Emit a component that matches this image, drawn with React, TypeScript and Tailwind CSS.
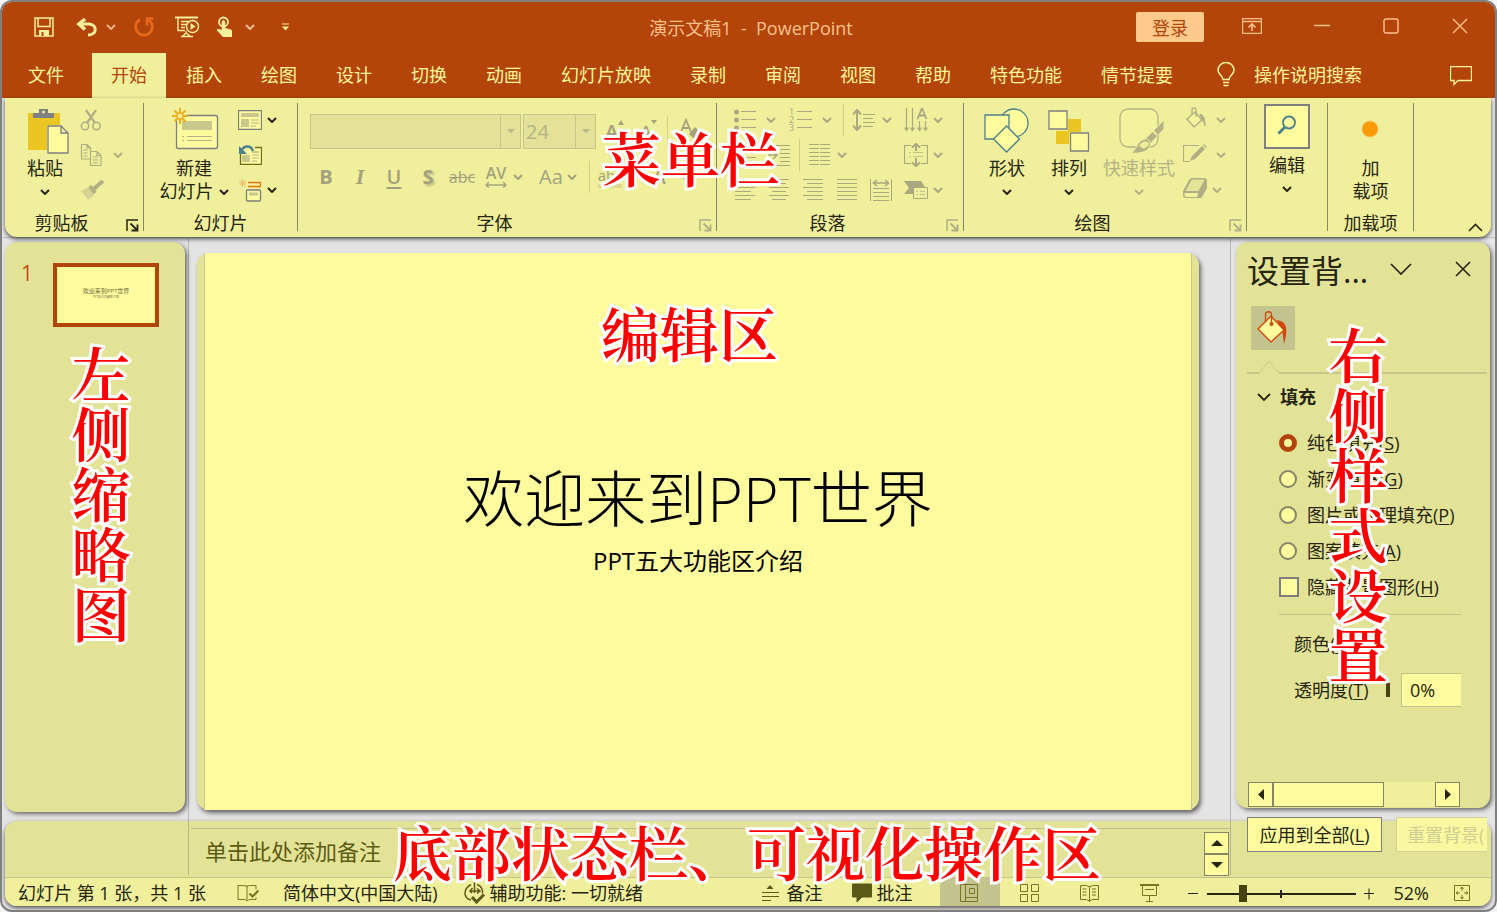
import { useState, type ReactNode } from "react";
import clsx from "clsx";

const TABS = ["文件", "开始", "插入", "绘图", "设计", "切换", "动画", "幻灯片放映", "录制", "审阅", "视图", "帮助", "特色功能", "情节提要"];

const FILLS = [
  { value: "solid", label: "纯色填充", hotkey: "S" },
  { value: "gradient", label: "渐变填充", hotkey: "G" },
  { value: "picture", label: "图片或纹理填充", hotkey: "P" },
  { value: "pattern", label: "图案填充", hotkey: "A" },
];

type IconProps = { w: number; h: number; children: ReactNode; className?: string };

function Icon({ w, h, children, className }: IconProps) {
  return (
    <svg width={w} height={h} viewBox={`0 0 ${w} ${h}`} fill="none" stroke="currentColor" className={clsx("shrink-0", className)} aria-hidden="true">
      {children}
    </svg>
  );
}

function Chevron({ className }: { className?: string }) {
  return (
    <Icon w={10} h={6} className={className}>
      <path d="M1 1l4 4 4-4" strokeWidth="2" />
    </Icon>
  );
}

function Callout({ text, className, vertical }: { text: string; className: string; vertical?: boolean }) {
  return (
    <div
      className={clsx(
        "absolute z-20 text-[59px] leading-[60px] font-semibold text-[#ff0000] pointer-events-none [-webkit-text-stroke:6px_white] [paint-order:stroke_fill] font-['Noto_Serif_CJK_SC','Noto_Sans_CJK_SC',serif]",
        vertical ? "w-[60px] break-all text-center" : "whitespace-nowrap",
        className
      )}
    >
      {text}
    </div>
  );
}

function Group({ label, launcher, className, children }: { label?: string; launcher?: "on" | "off"; className: string; children: ReactNode }) {
  return (
    <>
      <section className={clsx("flex shrink-0 flex-col", className)}>
        <div className="flex h-[105px]">{children}</div>
        <div className={clsx("flex h-[30px] items-center", launcher && "pr-1")}>
          <span className={clsx("flex-1 pt-px text-center", launcher && "mr-2")}>{label}</span>
          {launcher && (
            <button aria-label={`${label}设置`} className={clsx("pt-[6px]", launcher === "on" ? "text-[#26250f]" : "text-[#b0af84]")}>
              <Icon w={13} h={13}>
                <path d="M1 12V1h11" strokeWidth="1.5" />
                <path d="M4.500 4.500l6 6M11.500 5.500v6h-6" strokeWidth="1.800" />
              </Icon>
            </button>
          )}
        </div>
      </section>
      <div className="mt-px mb-[6px] w-px shrink-0 bg-[#86866c]" />
    </>
  );
}

function BigButton({ icon, lines, className, disabled }: { icon: ReactNode; lines: ReactNode[]; className?: string; disabled?: boolean }) {
  return (
    <button className={clsx("flex shrink-0 flex-col items-center leading-[23px]", disabled && "text-[#b4b385]", className)}>
      <span className="flex h-[55px] items-center pt-[3px]">{icon}</span>
      {lines.map((line, i) => (
        <span key={i} className="flex h-[23px] items-center gap-[5px] whitespace-nowrap">{line}</span>
      ))}
    </button>
  );
}

function Row({ children, className }: { children: ReactNode; className?: string }) {
  return <div className={clsx("flex h-[35px] items-center", className)}>{children}</div>;
}

// six rules of text, every second one shortened for the ragged alignments
function Lines({ long, short }: { long: [number, number]; short: [number, number] }) {
  return (
    <Icon w={20} h={22}>
      {[long, short, long, short, long, short].map(([x1, x2], i) => (
        <path key={i} d={`M${x1} ${i * 4}.5H${x2}`} />
      ))}
    </Icon>
  );
}

function TitleBar() {
  return (
    <div className="flex h-[51px] items-center pb-[2px]">
      <div className="flex flex-1 items-center pl-8 text-[#f4ef9d]">
        <button aria-label="保存">
          <Icon w={20} h={20}>
            <path d="M1 1h18v18H1z" strokeWidth="1.500" />
            <path d="M4 1v8.500h12V1" strokeWidth="1.500" />
            <path d="M5 13h10v6H5z" fill="currentColor" stroke="none" />
            <path d="M8.500 15v4" stroke="#b4450a" strokeWidth="2" />
          </Icon>
        </button>
        <button aria-label="撤消" className="ml-[22px]">
          <Icon w={22} h={20}>
            <path d="M9 2L3 7l6 5.500" strokeWidth="3.500" />
            <path d="M2.500 7H13c9 1 8 11-1 11" strokeWidth="3" />
          </Icon>
        </button>
        <button aria-label="撤消列表" className="ml-2 text-[#f5b088]"><Chevron /></button>
        <button aria-label="恢复" className="ml-[18px] text-[#e8681b]">
          <Icon w={20} h={20}>
            <path d="M6 2.500a8.300 8.300 0 1 0 8 0" strokeWidth="2.600" />
            <path d="M13 8.500V1.500h6.500" strokeWidth="2.600" />
          </Icon>
        </button>
        <button aria-label="从头开始" className="ml-[21px]">
          <Icon w={25} h={22}>
            <path d="M0 1.500h23" strokeWidth="2" />
            <path d="M3 2v12.500h7M6 5.500h8M6 8.500h5M6 11.500h4M11 15v3M6 20.500h12M8 20l3-3 4 3" strokeWidth="1.400" />
            <circle cx="17.500" cy="10.500" r="6" strokeWidth="1.500" />
            <path d="M15.500 7l5 3.500-5 3.500z" fill="currentColor" stroke="none" />
          </Icon>
        </button>
        <button aria-label="触摸/鼠标模式" className="ml-4">
          <Icon w={17} h={22}>
            <circle cx="7.500" cy="6" r="4.500" strokeWidth="1.800" />
            <path d="M5.700 6a1.800 1.800 0 0 1 3.600 0v6l5.500 1.500c1 .3 1.200 1 1.200 2V21H7L.5 14c1-1.500 2.700-1.500 5.200 0z" fill="currentColor" stroke="none" />
          </Icon>
        </button>
        <button aria-label="触摸模式列表" className="ml-3 text-[#f5c090]"><Chevron /></button>
        <button aria-label="自定义快速访问工具栏" className="ml-[26px]">
          <Icon w={9} h={8}>
            <path d="M1 1h7" />
            <path d="M1 3.500h7L4.500 7.500z" fill="currentColor" stroke="none" />
          </Icon>
        </button>
      </div>
      <h1 className="pt-[2px] whitespace-pre text-[#fbc18d]">演示文稿1  -  PowerPoint</h1>
      <div className="flex flex-1 items-center justify-end pr-[27px] text-[#fbc18d]">
        <button className="mt-px h-[30px] w-[68px] rounded-[2px] bg-[#fdca8c] pt-px text-[#b4450a]">登录</button>
        <button aria-label="功能区显示选项" className="ml-[38px] pb-[2px]">
          <Icon w={20} h={16}>
            <path d="M.5.500h19v15H.5zM1 3.500h18" strokeWidth="1.400" />
            <path d="M10 13V6.500M6.500 9.500L10 6l3.500 3.500" strokeWidth="1.600" />
          </Icon>
        </button>
        <button aria-label="最小化" className="ml-[52px] pb-[2px]">
          <Icon w={16} h={16}><path d="M0 7.500h16" strokeWidth="1.400" /></Icon>
        </button>
        <button aria-label="最大化" className="ml-[53px] pb-[2px]">
          <Icon w={16} h={16}><rect x="1" y="1" width="14" height="14" rx="2" strokeWidth="1.400" /></Icon>
        </button>
        <button aria-label="关闭" className="ml-[53px] pb-[2px]">
          <Icon w={16} h={16}><path d="M1 1l14 14M15 1L1 15" strokeWidth="1.400" /></Icon>
        </button>
      </div>
    </div>
  );
}

function TabBar() {
  const [active, setActive] = useState("开始");
  return (
    <nav className="flex h-[45px] items-stretch gap-px pl-2 text-[#fdf69d]">
      {TABS.map((tab) => (
        <button
          key={tab}
          onClick={() => setActive(tab)}
          className={clsx("px-[18px] pb-[2px] whitespace-nowrap first:mr-[9px] not-first:px-[19px]", tab === active && "bg-[#f0ef9c] text-[#b4450a]")}
        >
          {tab}
        </button>
      ))}
      <button className="ml-6 flex items-center gap-[19px] pb-[2px] whitespace-nowrap">
        <Icon w={18} h={25}>
          <path d="M6 17.500c0-4-5-4.500-5-9.500a8 7.500 0 0 1 16 0c0 5-5 5.500-5 9.500zM6 20.500h6M6.500 23.500h5" strokeWidth="1.500" />
        </Icon>
        操作说明搜索
      </button>
      <button aria-label="批注" className="mr-[23px] ml-auto">
        <Icon w={22} h={20}>
          <path d="M.5.500h21v14H8L4 18.500v-4H.500z" strokeWidth="1.300" />
        </Icon>
      </button>
    </nav>
  );
}

function ClipboardGroup() {
  return (
    <Group label="剪贴板" launcher="on" className="w-[138px]">
      <BigButton
        className="ml-[17px] w-[46px]"
        icon={
          <Icon w={42} h={46} className="ml-[6px]">
            <path d="M1 5h32v37H1z" fill="#ebc622" stroke="none" />
            <path d="M6 10V5h6V1h9v4h6v5z" fill="#7f7f86" stroke="none" />
            <circle cx="16.500" cy="4" r="1.500" fill="#f0ef9c" stroke="none" />
            <path d="M20 17h14l8 8v21H20z" fill="#f0ef9c" stroke="none" />
            <path d="M21 18h13l7 7v20H21zM34 18v7h7" fill="#fdfb9e" stroke="#7f7f7f" strokeWidth="1.300" />
          </Icon>
        }
        lines={["粘贴", <Chevron key="c" />]}
      />
      <div className="ml-[12px] text-[#b0af84]">
        <Row>
          <button aria-label="剪切">
            <Icon w={22} h={22}>
              <path d="M6 1l9 13M16 1L7 14" strokeWidth="2.200" />
              <circle cx="5" cy="17" r="3.700" strokeWidth="1.500" />
              <circle cx="16.500" cy="17" r="3.700" strokeWidth="1.500" />
            </Icon>
          </button>
        </Row>
        <Row>
          <button aria-label="复制" className="flex items-center gap-[11px]">
            <Icon w={22} h={22}>
              <path d="M10 15H1.500V.500H7l3.500 3.500v3M7 .500V4h3.500M3.500 6h4M3.500 9h4M3.500 12h4" strokeWidth="1.200" />
              <path d="M10.500 7.500H17l4 4v10H10.500zM17 7.500v4h4M13 13h5M13 16h5M13 19h5" strokeWidth="1.200" />
            </Icon>
            <Chevron />
          </button>
        </Row>
        <Row>
          <button aria-label="格式刷">
            <Icon w={24} h={20}>
              <path d="M1 11l8-4 6 7-7 6z" fill="#d4d391" stroke="none" />
              <path d="M10 6l5 7" strokeWidth="3.500" />
              <path d="M14 9l3-3M17 6l6-5" strokeWidth="4" />
            </Icon>
          </button>
        </Row>
      </div>
    </Group>
  );
}

function SlidesGroup() {
  return (
    <Group label="幻灯片" className="w-[153px]">
      <BigButton
        className="ml-[15px] w-[70px]"
        icon={
          <Icon w={50} h={44} className="mb-[6px]">
            <rect x="7.500" y="9.500" width="41" height="33" rx="2" fill="#fdfb9e" stroke="#7f7f7f" strokeWidth="1.300" />
            <path d="M13 15h30v9H13z" fill="#c8c88e" stroke="none" />
            <path d="M13 30.500h2M18 30.500h25M13 34.500h2M18 34.500h25" stroke="#b5b487" />
            <circle cx="11" cy="10" r="5.500" fill="#f0ef9c" stroke="none" />
            <path d="M11 2v5M11 13v5M3 10h5M14 10h5M5.500 4.500l3 3M13.500 12.500l3 3M16.500 4.500l-3 3M8.500 12.500l-3 3" stroke="#ebb022" strokeWidth="2" />
            <circle cx="11" cy="10" r="3" stroke="#ebb022" strokeWidth="1.300" />
          </Icon>
        }
        lines={["新建", <span key="l" className="flex items-center gap-[5px]">幻灯片<Chevron /></span>]}
      />
      <div className="ml-[9px]">
        <Row>
          <button aria-label="版式" className="flex items-center gap-[5px]">
            <Icon w={24} h={20}>
              <path d="M.5.500h23v19H.5z" fill="#fdfb9e" stroke="#7f7f7f" strokeWidth="1.300" />
              <path d="M3 3h18v4H3zM3 9h8v8H3z" fill="#c8c88e" stroke="none" />
              <path d="M13 10h8M13 13h8M13 16h5" stroke="#b5b487" />
            </Icon>
            <Chevron />
          </button>
        </Row>
        <Row>
          <button aria-label="重置">
            <Icon w={24} h={20}>
              <path d="M2.500 9v10.500h21v-17H17" fill="#fdfb9e" stroke="#6f6e1c" strokeWidth="1.300" />
              <path d="M4 10h8v7H4zM14 6h7v2h-7z" fill="#c8c88e" stroke="none" />
              <path d="M14 10h7M14 13h7M14 16h5" stroke="#b5b487" />
              <path d="M1 1v8h8z" fill="#4c7f8c" stroke="none" />
              <path d="M3 6c3-6 10-6 12 0" stroke="#4c7f8c" strokeWidth="2.400" />
            </Icon>
          </button>
        </Row>
        <Row>
          <button aria-label="节" className="flex items-center gap-[5px]">
            <Icon w={24} h={24}>
              <path d="M10 4.500h13M10 8.500h13M22.500 4.500v4" stroke="#e07a10" strokeWidth="1.300" />
              <path d="M4.500 1v8M.500 5h8M1.500 2l6 6M7.500 2l-6 6" stroke="#e8bc6c" />
              <rect x="8.500" y="12" width="14" height="11" rx="1" fill="#fdfb9e" stroke="#7f7f7f" strokeWidth="1.300" />
              <path d="M11 14.500h9v3h-9z" fill="#c8c88e" stroke="none" />
            </Icon>
            <Chevron />
          </button>
        </Row>
      </div>
    </Group>
  );
}

function FontGroup() {
  const cell = "flex w-[34px] justify-center";
  const drop = "flex w-5 items-center justify-center border-l border-[#c6c589] text-[#bab98a]";
  const arrow = (
    <Icon w={8} h={5}><path d="M0 0h8L4 4.500z" fill="currentColor" stroke="none" /></Icon>
  );
  return (
    <Group label="字体" launcher="off" className="w-[418px]">
      <div className="pt-3 pl-3 text-[#a3a27c]">
        <div className="flex h-[35px] items-center">
          <div className="flex h-[35px] w-[211px] border border-[#c6c589] bg-[#e3e298]">
            <input aria-label="字体" className="min-w-0 flex-1" />
            <button aria-label="字体列表" className={drop}>{arrow}</button>
          </div>
          <div className="ml-[2px] flex h-[35px] w-[73px] border border-[#c6c589] bg-[#e3e298]">
            <input aria-label="字号" defaultValue="24" className="min-w-0 flex-1 pl-[2px] text-[20px] text-[#b5b485]" />
            <button aria-label="字号列表" className={drop}>{arrow}</button>
          </div>
          <button className="ml-[9px] flex items-start text-[20px] leading-[24px] font-semibold">
            A<Icon w={6} h={5}><path d="M0 5h6L3 0z" fill="currentColor" stroke="none" /></Icon>
          </button>
          <button className="ml-[16px] flex items-start text-[17px] leading-[24px] font-semibold">
            A<Icon w={6} h={5}><path d="M0 0h6L3 4z" fill="currentColor" stroke="none" /></Icon>
          </button>
          <div className="ml-[10px] h-8 w-px bg-[#cfce90]" />
          <button aria-label="清除格式" className="ml-[12px]">
            <Icon w={22} h={24} className="mb-1">
              <path d="M1 14L6 2l5 12M3 10h6" strokeWidth="1.800" />
              <path d="M15 9l5 5-6 7-5-5z" fill="currentColor" stroke="none" />
            </Icon>
          </button>
        </div>
        <div className="mt-[10px] -ml-px flex h-[35px] items-center text-[20px]">
          <button className={clsx(cell, "font-bold")}>B</button>
          <button className={clsx(cell, "font-['Liberation_Serif',serif] text-[22px] font-bold italic")}>I</button>
          <button className={clsx(cell, "font-semibold underline underline-offset-3")}>U</button>
          <button className={clsx(cell, "font-bold [text-shadow:2px_2px_2px_#bdbc88]")}>S</button>
          <button className={clsx(cell, "text-[16px] line-through")}>abc</button>
          <button className="flex w-[50px] items-center justify-center gap-[6px]">
            <span className="flex flex-col items-center text-[16px] leading-[17px] font-semibold">
              AV
              <Icon w={22} h={6}><path d="M1 3h20M4 0L1 3l3 3M18 0l3 3-3 3" strokeWidth="1.400" /></Icon>
            </span>
            <Chevron />
          </button>
          <button className="ml-[10px] flex items-center gap-1">Aa<Chevron /></button>
          <div className="ml-[12px] h-8 w-px bg-[#cfce90]" />
          <button className="ml-[8px] flex items-center gap-2">
            <span className="border-b-4 border-[#dcdb94] text-[15px] leading-[18px]">abc</span>
            <Chevron />
          </button>
          <button className="ml-[12px] flex items-center gap-[14px] font-semibold">A<Chevron /></button>
        </div>
      </div>
    </Group>
  );
}

function ParagraphGroup() {
  const sep = <div className="h-8 w-px bg-[#cfce90]" />;
  return (
    <Group label="段落" launcher="off" className="w-[246px]">
      <div className="flex-1 pr-5 pl-[17px] text-[#a9a87f]">
        <Row>
          <button aria-label="项目符号" className="flex items-center gap-[10px]">
            <Icon w={22} h={22}>
              {[3, 11, 19].map((y) => (
                <g key={y}>
                  <circle cx="2.500" cy={y} r="2.500" fill="currentColor" stroke="none" />
                  <path d={`M7 ${y - 1}.500h15`} />
                </g>
              ))}
            </Icon>
            <Chevron />
          </button>
          <button aria-label="编号" className="ml-[13px] flex items-center gap-[10px]">
            <span className="flex items-center gap-[3px]">
              <span className="text-[9px] leading-[8px]">1<br />2<br />3</span>
              <Icon w={15} h={22}><path d="M0 2.500h15M0 10.500h15M0 18.500h15" /></Icon>
            </span>
            <Chevron />
          </button>
          <div className="ml-[11px]">{sep}</div>
          <button aria-label="行距" className="ml-[9px] flex items-center gap-[7px]">
            <Icon w={22} h={22}>
              <path d="M4 1v20M0 5.500L4 1l4 4.500M0 16.500L4 21l4-4.500" strokeWidth="2" />
              <path d="M10 5.500h12M10 9.500h10M10 13.500h12M10 17.500h10" />
            </Icon>
            <Chevron />
          </button>
          <button aria-label="文字方向" className="ml-auto flex items-center gap-[5px]">
            <Icon w={24} h={24}>
              <path d="M2.500 0v22M.500 19.500l2 3 2-3M8.500 0v22M6.500 19.500l2 3 2-3M15.500 13v9M13.500 19.500l2 3 2-3M21.500 13v9M19.500 19.500l2 3 2-3" strokeWidth="1.200" />
              <path d="M13.500 11l4.500-11 4.500 11M15 7.500h6" strokeWidth="1.800" />
            </Icon>
            <Chevron />
          </button>
        </Row>
        <Row>
          <button aria-label="减少缩进">
            <Icon w={22} h={22}><path d="M0 1.500h22M12 5.500h10M12 9.500h10M12 13.500h10M12 17.500h10M0 21.500h22M10 11H1M5 7l-4 4 4 4" /></Icon>
          </button>
          <button aria-label="增加缩进" className="ml-[12px]">
            <Icon w={22} h={22}>
              <path d="M2 1.500h20M12 5.500h10M12 9.500h10M12 13.500h10M12 17.500h10M0 21.500h22" />
              <path d="M0 11h9M5 7l4 4-4 4" strokeWidth="1.600" />
            </Icon>
          </button>
          <div className="ml-[9px]">{sep}</div>
          <button aria-label="分栏" className="ml-[9px] flex items-center gap-[7px]">
            <Icon w={21} h={22}>
              <path d="M0 .500h10M0 4.500h10M0 8.500h10M0 12.500h10M0 16.500h10M0 20.500h10M11 .500h10M11 4.500h10M11 8.500h10M11 12.500h10M11 16.500h10M11 20.500h10" />
            </Icon>
            <Chevron />
          </button>
          <button aria-label="对齐文本" className="ml-auto flex items-center gap-[5px]">
            <Icon w={24} h={24}>
              <path d="M7 2.500H.500v18H7M17 2.500h6.500v18H17" strokeWidth="1.200" />
              <path d="M5 9.500h2M9 9.500h10M5 13.500h2M9 13.500h10" stroke="#c4c38b" />
              <path d="M12 1v7M8 4.500L12 1l4 3.500M12 15v8M8 19.500l4 3.500 4-3.500" strokeWidth="2" />
            </Icon>
            <Chevron />
          </button>
        </Row>
        <Row className="gap-[14px] pl-px">
          <button aria-label="左对齐"><Lines long={[0, 20]} short={[0, 16]} /></button>
          <button aria-label="居中"><Lines long={[0, 20]} short={[3, 17]} /></button>
          <button aria-label="右对齐"><Lines long={[0, 20]} short={[4, 20]} /></button>
          <button aria-label="两端对齐"><Lines long={[0, 20]} short={[0, 20]} /></button>
          <button aria-label="分散对齐" className="-ml-px">
            <Icon w={22} h={22}>
              <path d="M.5 0v22M21.500 0v22M3 9.500h16M3 13.500h16M3 17.500h16M3 21.500h16" />
              <path d="M3 4h16M7 1L3.500 4 7 7M15 1l3.500 3L15 7" strokeWidth="1.600" />
            </Icon>
          </button>
          <button aria-label="转换为 SmartArt" className="-ml-[2px] flex items-center gap-[5px]">
            <Icon w={24} h={20}>
              <path d="M0 1h17l4 6H10v7H0l5-6z" fill="currentColor" stroke="none" />
              <path d="M9.500 7.500h14v11h-14z" fill="#f0ef9c" />
              <path d="M12 11.500h2M16 11.500h5M12 14.500h2M16 14.500h5" stroke="#c4c38b" />
            </Icon>
            <Chevron />
          </button>
        </Row>
      </div>
    </Group>
  );
}

function DrawingGroup() {
  return (
    <Group label="绘图" launcher="off" className="w-[282px]">
      <BigButton
        className="ml-[20px] w-[46px]"
        icon={
          <Icon w={46} h={46}>
            <g fill="#fdfb9e" stroke="#4c7f8c" strokeWidth="1.300">
              <circle cx="30" cy="15" r="14" />
              <path d="M1 7h24v24H1z" />
              <path d="M22.500 18l13 13-13 13-13-13z" />
            </g>
          </Icon>
        }
        lines={["形状", <Chevron key="c" />]}
      />
      <BigButton
        className="ml-[16px] w-[46px]"
        icon={
          <Icon w={42} h={42}>
            <path d="M20 9h13v13H20zM8 21h13v13H8z" fill="#ebc622" stroke="none" />
            <path d="M1 1h18v18H1zM22.500 23h18v18h-18z" fill="#fdfb9e" stroke="#7f7f7f" strokeWidth="1.300" />
          </Icon>
        }
        lines={["排列", <Chevron key="c" />]}
      />
      <BigButton
        disabled
        className="ml-[11px] w-[72px]"
        icon={
          <Icon w={46} h={46} className="ml-[6px]">
            <rect x="1" y="1" width="38" height="38" rx="8" fill="#f2f19c" strokeWidth="1.300" />
            <path d="M45 12v9L31 36l-5-5z" fill="currentColor" stroke="#f0ef9c" />
            <path d="M12 45c5-2 6-12 13-14 4-1 7 3 6 7-2 6-11 8-19 7z" fill="currentColor" stroke="#f0ef9c" />
            <path d="M20 38c3-5 8-6 10-2-2 4-4 3-5 5z" fill="#efee9a" stroke="none" />
            <path d="M33 22l5 5" stroke="#f0ef9c" strokeWidth="2" />
          </Icon>
        }
        lines={["快速样式", <Chevron key="c" />]}
      />
      <div className="ml-[8px] text-[#b0af84]">
        <Row>
          <button aria-label="形状填充" className="flex items-center gap-[9px]">
            <Icon w={24} h={22} className="mb-1">
              <path d="M12 5l7 8-8 7-7-8z" fill="#f5f49c" strokeWidth="1.400" />
              <path d="M9 8V2.500c0-2 4-2 4 0V10" strokeWidth="1.300" />
              <path d="M17 7c4 1 5 5 5 12-1-4-2-5-3-6z" fill="currentColor" />
            </Icon>
            <Chevron />
          </button>
        </Row>
        <Row>
          <button aria-label="形状轮廓" className="flex items-center gap-[9px]">
            <Icon w={24} h={20} className="mb-1">
              <path d="M16 2.500H.500v16H7" strokeWidth="1.200" />
              <path d="M7 18l2-5L19 3l3 3-10 10zM20 2l1-1 3 3-1 1z" fill="currentColor" stroke="none" />
            </Icon>
            <Chevron />
          </button>
        </Row>
        <Row>
          <button aria-label="形状效果" className="flex items-center gap-[5px]">
            <Icon w={24} h={22} className="mb-1">
              <path d="M0 14L6 3c.5-1 1.500-2 3-2h12c2 0 3 1 3 3v7l-5 9c-.5 1-1 1-2 1H3c-2 0-3-1-3-3z" fill="currentColor" stroke="none" />
              <path d="M2.500 14l5.500-10c.5-1 1-1.500 2-1.500h10c1 0 1.500.500 1 1.500l-5.500 10z" fill="#e4e396" stroke="none" />
              <path d="M1.500 16H15l-1 4H4c-1.500 0-2.500-1-2.500-2z" fill="#f5f49c" stroke="none" />
            </Icon>
            <Chevron />
          </button>
        </Row>
      </div>
    </Group>
  );
}

function Ribbon() {
  return (
    <div className="relative z-10 mr-1 ml-[3px] flex rounded-b-[12px] bg-[#f0ef9c] pt-1 shadow-[0_2px_4px_rgba(0,0,0,0.65)]">
      <ClipboardGroup />
      <SlidesGroup />
      <FontGroup />
      <ParagraphGroup />
      <DrawingGroup />
      <Group className="w-[80px]">
        <button className="flex w-full flex-col items-center pt-[2px] leading-[23px]">
          <span className="flex h-[45px] w-[46px] items-center justify-center border-2 border-[#7f7f7f] bg-[#fdfb9e] text-[#4c7f8c]">
            <Icon w={20} h={20} className="mb-1">
              <circle cx="12" cy="7.500" r="6" strokeWidth="1.800" />
              <path d="M8 12l-6.500 6.500" strokeWidth="2.800" />
            </Icon>
          </span>
          <span className="mt-[5px]">编辑</span>
          <span className="flex h-[23px] items-center"><Chevron /></span>
        </button>
      </Group>
      <Group label="加载项" className="w-[85px]">
        <BigButton
          className="w-full"
          icon={
            <Icon w={18} h={18} className="mr-[2px] mb-1">
              <circle cx="9" cy="9" r="8" fill="#fb9a05" stroke="#f7c264" />
            </Icon>
          }
          lines={["加", "载项"]}
        />
      </Group>
      <button aria-label="折叠功能区" className="mr-2 mb-[5px] ml-auto self-end">
        <Icon w={15} h={9}><path d="M1 8l6.500-6.500L14 8" strokeWidth="1.600" /></Icon>
      </button>
      <Callout text="菜单栏" className="top-[29px] left-[597px]" />
    </div>
  );
}

function SlideList() {
  return (
    <aside className="relative mt-1 mb-[9px] ml-[3px] w-[180px] shrink-0 rounded-[12px] bg-[#e3e398] pt-[21px] shadow-[2px_2px_4px_rgba(0,0,0,0.55)]">
      <button className="flex items-start pl-4 text-[#c84a10]">
        <span className="w-8 text-left text-[21px] leading-[20px]">1</span>
        <span className="flex h-[64px] w-[106px] flex-col items-center justify-center border-4 border-[#b4450a] bg-[#fdfb9e] pb-1 text-[#6d6c3c]">
          <span className="text-[6px] leading-[8px]">欢迎来到PPT世界</span>
          <span className="text-[3px] leading-[5px]">PPT五大功能区介绍</span>
        </span>
      </button>
      <Callout vertical text="左侧缩略图" className="top-[100px] left-[66px]" />
    </aside>
  );
}

function Slide() {
  return (
    <main className="relative mt-[15px] mr-[31px] mb-[11px] ml-2 flex-1 rounded-[12px] bg-[#e3e398] px-[7px] shadow-[2px_3px_4px_rgba(0,0,0,0.55)]">
      <div className="flex h-full flex-col items-center border-x border-[#c9c88c] bg-[#fdfb9e] pt-[208px] text-black">
        <h2 className="text-[61px] leading-[76px] font-light whitespace-nowrap">欢迎来到PPT世界</h2>
        <p className="mt-[8px] text-[24px] leading-[32px] whitespace-nowrap">PPT五大功能区介绍</p>
      </div>
      <Callout text="编辑区" className="top-[49px] left-[404px]" />
    </main>
  );
}

function FormatPane() {
  const [fill, setFill] = useState("solid");
  const scrollBtn = "flex h-[25px] w-[25px] items-center justify-center border border-[#85856a] bg-[#fdfb9e]";
  return (
    <aside className="relative mt-1 mr-[5px] mb-[13px] ml-[5px] flex w-[254px] shrink-0 flex-col rounded-[12px] bg-[#e3e398] pl-[11px] shadow-[2px_2px_4px_rgba(0,0,0,0.55)]">
      <div className="flex items-center pt-2 pr-[19px]">
        <h2 className="flex-1 text-[32px] leading-[42px]">设置背...</h2>
        <button aria-label="任务窗格选项" className="pb-1">
          <Icon w={22} h={13}><path d="M1 1l10 10L21 1" strokeWidth="1.600" /></Icon>
        </button>
        <button aria-label="关闭窗格" className="ml-[43px] pb-1">
          <Icon w={16} h={16}><path d="M1 1l14 14M15 1L1 15" strokeWidth="1.600" /></Icon>
        </button>
      </div>
      <button aria-label="填充" className="mt-[14px] ml-1 flex size-[44px] items-center justify-center bg-[#c4c48f]">
        <Icon w={34} h={34}>
          <path d="M21 9c9 1 12 8 7 24-1-8-1-12-3-15z" fill="#d0480a" stroke="none" />
          <path d="M15 5l13 14-13 12L2 18z" fill="#fdfb9e" stroke="#d0480a" strokeWidth="1.400" />
          <path d="M9.500 11V3c0-3 6-3 6 0v10" stroke="#d0480a" strokeWidth="1.300" />
          <circle cx="15.500" cy="13" r="2" fill="#d0480a" stroke="none" />
        </Icon>
      </button>
      <div className="mt-[10px] mr-[3px] flex items-end">
        <div className="h-[2px] w-[12px] bg-[#c9c88c]" />
        <Icon w={20} h={14} className="text-[#c9c88c]"><path d="M0 13L10 1l10 12" /></Icon>
        <div className="h-[2px] flex-1 bg-[#c9c88c]" />
      </div>
      <button className="mt-[11px] ml-[10px] flex items-center gap-[9px] leading-6 font-bold">
        <Icon w={14} h={9}><path d="M1 1l6 6 6-6" strokeWidth="1.800" /></Icon>
        填充
      </button>
      <div className="mt-[16px] ml-8">
        {FILLS.map((f) => (
          <label key={f.value} className="flex h-9 items-center gap-[10px] whitespace-nowrap">
            <input
              type="radio"
              name="fill"
              checked={fill === f.value}
              onChange={() => setFill(f.value)}
              className="size-[18px] shrink-0 appearance-none rounded-full border-2 border-[#85856a] bg-[#fdfb9e] checked:border-[5px] checked:border-[#b4450a]"
            />
            <span>{f.label}(<u className="underline-offset-2">{f.hotkey}</u>)</span>
          </label>
        ))}
        <label className="flex h-9 items-center gap-[8px] whitespace-nowrap">
          <input type="checkbox" className="size-5 shrink-0 appearance-none border-2 border-[#7f7f7f] bg-[#fdfb9e] checked:bg-[#b4450a]" />
          <span>隐藏背景图形(<u className="underline-offset-2">H</u>)</span>
        </label>
        <div className="mt-[9px] mr-[29px] h-px bg-[#c3c28a]" />
        <div className="mt-[17px] ml-[15px] leading-6">颜色(<u className="underline-offset-2">C</u>)</div>
        <div className="mt-[17px] mr-[29px] ml-[15px] flex items-center">
          <label htmlFor="opacity">透明度(<u className="underline-offset-2">T</u>)</label>
          <div className="ml-auto h-[14px] w-1 bg-[#45430f]" />
          <input id="opacity" defaultValue="0%" className="ml-[11px] h-[34px] w-[60px] border-y border-l border-[#c3c28a] bg-[#fdfb9e] pl-2" />
        </div>
      </div>
      <div className="mt-auto mr-[30px] mb-px ml-px flex bg-[#f0ef9c]">
        <button aria-label="向左滚动" className={scrollBtn}>
          <Icon w={6} h={11}><path d="M6 0v11L0 5.500z" fill="currentColor" stroke="none" /></Icon>
        </button>
        <div className="h-[25px] w-[111px] border border-[#85856a] bg-[#fdfb9e]" />
        <button aria-label="向右滚动" className={clsx(scrollBtn, "ml-auto")}>
          <Icon w={6} h={11}><path d="M0 0v11l6-5.500z" fill="currentColor" stroke="none" /></Icon>
        </button>
      </div>
      <Callout vertical text="右侧样式设置" className="top-[81px] left-[92px]" />
    </aside>
  );
}

function Notes() {
  const spin = "flex h-[22px] w-[25px] items-center justify-center border border-[#85856a] bg-[#fdfb9e]";
  return (
    <div className="flex h-[56px]">
      <div className="w-[183px] shrink-0" />
      <div className="mb-[2px] w-px bg-[#b5b58e]" />
      <div className="mt-[7px] ml-[2px] flex flex-1 border-t border-[#bfbe8c]">
        <textarea
          aria-label="备注"
          placeholder="单击此处添加备注"
          className="ml-[14px] h-10 flex-1 resize-none pt-[7px] text-[22px] leading-[30px] placeholder:text-[#5c5b14] placeholder:opacity-100"
        />
        <div className="mt-[3px] mr-px">
          <button aria-label="向上" className={spin}>
            <Icon w={12} h={6}><path d="M0 6h12L6 0z" fill="currentColor" stroke="none" /></Icon>
          </button>
          <button aria-label="向下" className={spin}>
            <Icon w={12} h={6}><path d="M0 0h12L6 6z" fill="currentColor" stroke="none" /></Icon>
          </button>
        </div>
      </div>
      <div className="mb-[2px] w-px bg-[#b5b58e]" />
      <div className="-mt-1 mr-[4px] ml-4 flex w-[240px] items-start gap-[14px] overflow-hidden">
        <button className="h-[35px] w-[135px] shrink-0 border border-[#7f7f7f] bg-[#fdfb9e] whitespace-nowrap">应用到全部(<u className="underline-offset-2">L</u>)</button>
        <button disabled className="h-[35px] flex-1 border-y border-l border-[#d2d19a] bg-[#f9f8a0] pl-[10px] text-left whitespace-nowrap text-[#cfce92]">重置背景(</button>
      </div>
    </div>
  );
}

function StatusBar() {
  const view = "flex h-full w-[60px] items-center justify-center pt-[2px]";
  return (
    <footer className="flex h-[29px] items-center border-t border-[#c3c28a] pl-[13px] whitespace-nowrap">
      <span className="pt-[2px]">幻灯片 第 1 张，共 1 张</span>
      <button aria-label="拼写检查" className="ml-[31px] pt-[2px] text-[#77761f]">
        <Icon w={22} h={18}>
          <path d="M10 16.500V2C7 1.500 4 1.500 1 1.500v14h6c1 0 2 .500 3 1.500 1-1 2-1.500 4-1.500h5v-2M10 2c2-.500 5-.500 9-.500v4" />
          <path d="M12.500 9.500l3 3 6-6" strokeWidth="2.200" />
        </Icon>
      </button>
      <button className="ml-[24px] pt-[2px]">简体中文(中国大陆)</button>
      <button className="ml-[26px] flex items-center gap-1 pt-[2px]">
        <Icon w={22} h={22} className="text-[#5b5a18]">
          <path d="M7 2.500C-1 7-1 16 7 18M13 2.500c4 1.500 6 5 5.500 9M10.500 0v11M6 9h10M13 6.500L16 9l-3 2.500M8.500 6L6 9l2 2" strokeWidth="1.500" />
          <path d="M8 15l4.500 5L20 12.500" strokeWidth="3" />
        </Icon>
        辅助功能: 一切就绪
      </button>
      <button className="ml-auto flex items-center gap-[8px] pt-[2px]">
        <Icon w={17} h={18} className="text-[#5b5a18]">
          <path d="M0 8.500h17M0 12.500h17M0 16.500h9" />
          <path d="M4.500 5L8 1l3.500 4z" fill="currentColor" stroke="none" />
        </Icon>
        备注
      </button>
      <button className="mr-[27px] ml-[28px] flex items-center gap-1 pt-[2px]">
        <Icon w={22} h={20} className="text-[#5b5a18]">
          <path d="M1.500 1h19v13H11l-5 5v-5H1.500z" fill="currentColor" strokeLinejoin="round" />
        </Icon>
        批注
      </button>
      <div className="flex h-full text-[#77761f]">
        <button aria-label="普通视图" className={clsx(view, "bg-[#c4c48f]")}>
          <Icon w={19} h={18}><path d="M.5.500h17v17H.500zM5.500.500v17M5.500 13.500h12M9.500 4.500h5v5h-5z" /></Icon>
        </button>
        <button aria-label="幻灯片浏览" className={view}>
          <Icon w={19} h={18}><path d="M.5.500h7v7h-7zM11.500.500h7v7h-7zM.500 10.500h7v7h-7zM11.500 10.500h7v7h-7z" /></Icon>
        </button>
        <button aria-label="阅读视图" className={view}>
          <Icon w={19} h={18}><path d="M9.500 2v16M.500 1.500h6l3 1.500 3-1.500h6v14h-6l-3 1.500-3-1.500h-6zM2.500 5h4M2.500 8h4M2.500 11h4M12 5h4M12 8h4M12 11h4" /></Icon>
        </button>
        <button aria-label="幻灯片放映" className={view}>
          <Icon w={19} h={18}><path d="M0 1h19" strokeWidth="2" /><path d="M2.500 1v10.500h14V1M5 5.500h9M9.500 12v5M6 17.500h7" /></Icon>
        </button>
      </div>
      <button aria-label="缩小" className="ml-[7px] pt-[3px]">
        <Icon w={12} h={12}><path d="M1 5.500h10" /></Icon>
      </button>
      <div className="relative mt-[3px] ml-[8px] flex h-5 w-[149px] items-center">
        <div className="absolute top-[6px] left-[73px] h-2 w-[2px] bg-[#26250f]" />
        <input
          type="range"
          aria-label="缩放"
          defaultValue={23}
          className="relative h-[2px] w-full appearance-none bg-[#26250f] [&::-webkit-slider-thumb]:h-[17px] [&::-webkit-slider-thumb]:w-2 [&::-webkit-slider-thumb]:appearance-none [&::-webkit-slider-thumb]:bg-[#45430f]"
        />
      </div>
      <button aria-label="放大" className="ml-[7px] pt-[3px]">
        <Icon w={12} h={12}><path d="M1 5.500h10M6 .500v11" /></Icon>
      </button>
      <button className="ml-[19px] pt-[2px]">52%</button>
      <button aria-label="适应窗口" className="mr-[21px] ml-[25px] pt-[2px] text-[#77761f]">
        <Icon w={16} h={16}>
          <path d="M.5.500h15v15H.5z" />
          <path d="M8 2v4M8 10v4M2 8h4M10 8h4M6.500 4L8 2l1.500 2M6.500 12L8 14l1.500-2M4 6.500L2 8l2 1.500M12 6.500L14 8l-2 1.500" />
        </Icon>
      </button>
    </footer>
  );
}

export default function App() {
  return (
    <div className="bg-[#f4f4f6]">
      <div className="flex min-h-screen flex-col overflow-hidden rounded-[12px] border-2 border-[#7f7f80] bg-[#e4e4e5] font-['Open_Sans','Noto_Sans_CJK_SC',sans-serif] text-[18px] leading-[24px] text-[#26250f]">
        <header className="bg-[#b4450a]">
          <TitleBar />
          <TabBar />
        </header>
        <Ribbon />
        <div className="flex flex-1 border-t border-[#c6c6c6]">
          <SlideList />
          <div className="ml-[3px] w-px bg-[#b9b9b9]" />
          <Slide />
          <div className="w-px bg-[#b9b9b9]" />
          <FormatPane />
        </div>
        <div className="relative mr-1 mb-1 ml-[3px] rounded-[12px] bg-[linear-gradient(#e3e398_56px,#f0ef9c_56px)] shadow-[0_2px_4px_rgba(0,0,0,0.65)]">
          <Notes />
          <StatusBar />
          <Callout text="底部状态栏、可视化操作区" className="top-0 left-[388px]" />
        </div>
      </div>
    </div>
  );
}
